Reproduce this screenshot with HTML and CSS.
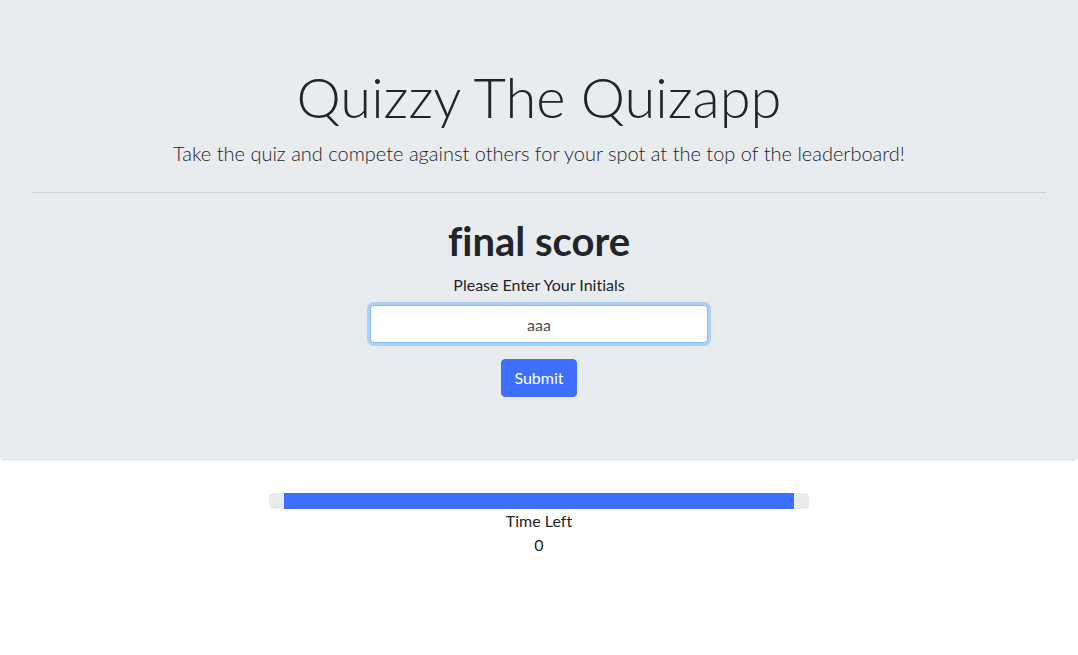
FILE: index.html
```html
<!DOCTYPE html>
<html lang="en">
<head>
<meta charset="utf-8">
<title>Quizzy The Quizapp</title>
<link rel="stylesheet" href="styles.css">
</head>
<body>
<header class="jumbotron">
  <h1 class="display">Quizzy The Quizapp</h1>
  <p class="lead">Take the quiz and compete against others for your spot at the top of the leaderboard!</p>
  <hr class="divider">
  <section class="score">
    <h2 class="score-title">final score</h2>
    <label class="score-label" for="initials">Please Enter Your Initials</label>
    <input class="score-input" id="initials" type="text" value="aaa">
    <button class="btn-submit" type="button">Submit</button>
  </section>
</header>
<main class="timer">
  <div class="progress"><div class="progress-bar" style="width: 94.44%"></div></div>
  <div class="timer-label">Time Left</div>
  <div class="timer-value">0</div>
</main>
</body>
</html>
```
FILE: styles.css
```css
* { box-sizing: border-box; }
html, body { margin: 0; padding: 0; }
body {
  font-family: Lato, "Open Sans", sans-serif;
  font-size: 16px;
  line-height: 1.5;
  color: #212529;
  background: #fff;
  text-align: center;
  font-variant-ligatures: none;
}
.jumbotron {
  background: #e9ecef;
  padding: 64px 32px;
  margin-bottom: 32px;
  border-radius: 0 0 4px 4px;
}
.display {
  margin: 0 0 8px;
  font-size: 56px;
  font-weight: 300;
  line-height: 66px;
}
.lead {
  margin: 0;
  font-size: 20px;
  font-weight: 300;
  line-height: 1.5;
}
.divider {
  margin: 24px 0;
  border: 0;
  border-top: 1px solid rgba(0, 0, 0, 0.1);
  height: 0;
}
.score {
  display: flex;
  flex-direction: column;
  align-items: center;
}
.score-title {
  margin: 0 0 8px;
  font-size: 40px;
  font-weight: 700;
  line-height: 48px;
}
.score-label {
  display: block;
  margin-bottom: 8px;
}
.score-input {
  width: 338px;
  height: 38px;
  padding: 6px 12px;
  font-family: inherit;
  font-size: 16px;
  line-height: 1.5;
  color: #495057;
  text-align: center;
  background: #fff;
  border: 1px solid #80bdff;
  border-radius: 4px;
  box-shadow: 0 0 0 3px rgba(0, 123, 255, 0.25);
  outline: 0;
}
.btn-submit {
  margin-top: 16px;
  padding: 6px 12px;
  font-family: inherit;
  font-size: 16px;
  line-height: 24px;
  color: #fff;
  background: #3f6fff;
  border: 1px solid #3f6fff;
  border-radius: 4px;
}
.timer {
  display: flex;
  flex-direction: column;
  align-items: center;
}
.progress {
  display: flex;
  justify-content: center;
  width: 540px;
  height: 16px;
  background: #e9ecef;
  border-radius: 4px;
  overflow: hidden;
}
.progress-bar {
  height: 100%;
  background: #3f6fff;
}
.timer-label, .timer-value { line-height: 24px; }
```
